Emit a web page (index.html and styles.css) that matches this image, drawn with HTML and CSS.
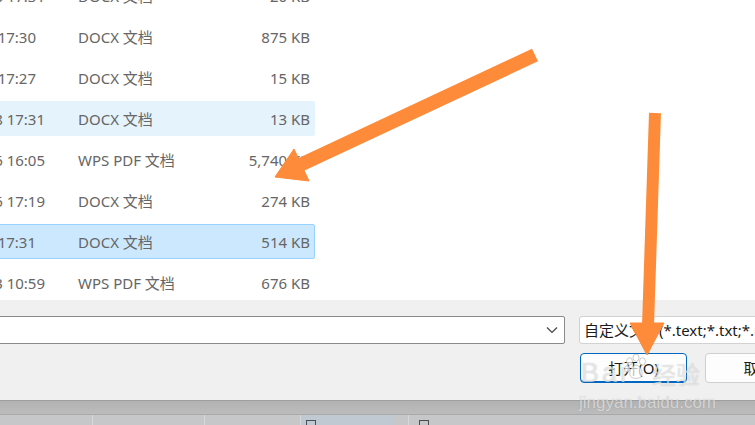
FILE: index.html
```html
<!DOCTYPE html>
<html lang="zh-CN">
<head>
<meta charset="utf-8">
<title>打开文件</title>
<link rel="stylesheet" href="styles.css">
</head>
<body>
<div class="screen">
  <div class="list">
    <div class="rows">
      <div class="row"><div class="item"><span class="date">2023/3/8 17:31</span><span class="type">DOCX 文档</span><span class="size">20 KB</span></div></div>
      <div class="row"><div class="item"><span class="date tight">2023/3/8 17:30</span><span class="type">DOCX 文档</span><span class="size">875 KB</span></div></div>
      <div class="row"><div class="item"><span class="date tight">2023/3/8 17:27</span><span class="type">DOCX 文档</span><span class="size">15 KB</span></div></div>
      <div class="row"><div class="item hover"><span class="date">2023/3/8 17:31</span><span class="type">DOCX 文档</span><span class="size">13 KB</span></div></div>
      <div class="row"><div class="item"><span class="date">2023/3/6 16:05</span><span class="type">WPS PDF 文档</span><span class="size">5,740 KB</span></div></div>
      <div class="row"><div class="item"><span class="date">2023/3/6 17:19</span><span class="type">DOCX 文档</span><span class="size">274 KB</span></div></div>
      <div class="row"><div class="item selected"><span class="date tight">2023/3/8 17:31</span><span class="type">DOCX 文档</span><span class="size">514 KB</span></div></div>
      <div class="row"><div class="item"><span class="date">2023/3/3 10:59</span><span class="type">WPS PDF 文档</span><span class="size">676 KB</span></div></div>
    </div>
  </div>
  <div class="panel">
    <div class="panel-row">
      <div class="filename">
        <svg class="chev" width="12" height="8" viewBox="0 0 12 8"><path d="M1 1.5 L6 6.5 L11 1.5" fill="none" stroke="#444" stroke-width="1.2"/></svg>
      </div>
      <div class="filter">自定义文件(*.text;*.txt;*.rtf)</div>
    </div>
    <div class="panel-row buttons">
      <div class="btn primary">打开(O)</div>
      <div class="btn">取消</div>
    </div>
  </div>
  <div class="taskbar">
    <div class="tb-top"></div>
    <div class="tb-bottom">
      <div class="tb-cell w92"></div>
      <div class="tb-cell w112"></div>
      <div class="tb-cell w96"></div>
      <div class="tb-cell w92 active"><span class="tb-icon"></span></div>
      <div class="tb-cell w15"></div>
      <div class="tb-cell last"><span class="tb-icon"></span></div>
    </div>
  </div>

  <div class="watermark">
    <div class="wm-top"><span class="wm-bai">Bai</span><svg class="paw" width="24" height="30" viewBox="0 0 26 30"><g fill="rgba(255,255,255,0.7)" stroke="rgba(120,120,120,0.4)" stroke-width="1"><ellipse cx="6" cy="9" rx="3.2" ry="4"/><ellipse cx="13" cy="5" rx="3.2" ry="4"/><ellipse cx="20" cy="9" rx="3.2" ry="4"/><ellipse cx="3.5" cy="17" rx="2.8" ry="3.4"/><path d="M13 13 C8 13 5 21 7 25 C9 28 17 28 19 25 C21 21 18 13 13 13 Z"/></g></svg><span class="wm-jy">经验</span></div>
    <div class="wm-url">jingyan.baidu.com</div>
  </div>

  <svg class="arrows" width="755" height="425" viewBox="0 0 755 425">
    <g fill="#fd8b3a" stroke="#fd8b3a">
      <line x1="535" y1="55" x2="300" y2="165" stroke-width="14"/>
      <polygon points="275,177 309,181 294,149" stroke-width="1"/>
      <line x1="655" y1="113" x2="648" y2="326" stroke-width="12"/>
      <polygon points="630,323 664,323 647,355" stroke-width="1"/>
    </g>
  </svg>
</div>
</body>
</html>
```
FILE: styles.css
```css
html, body {
  margin: 0;
  padding: 0;
  background: #ffffff;
}
body {
  width: 755px;
  height: 425px;
  overflow: hidden;
  font-family: "Noto Sans", "Noto Sans CJK SC", sans-serif;
}
.screen {
  position: relative;
  width: 755px;
  height: 425px;
  overflow: hidden;
}
.list {
  height: 300px;
  overflow: hidden;
  background: #ffffff;
}
.rows {
  margin-top: -25px;
  margin-left: -80px;
  width: 395px;
}
.row {
  height: 41px;
  padding: 3px 0;
  box-sizing: border-box;
}
.item {
  height: 35px;
  box-sizing: border-box;
  border: 1px solid transparent;
  border-radius: 2px;
  display: grid;
  grid-template-columns: 124px 1fr auto;
  align-items: center;
  padding-right: 4px;
  font-size: 15px;
  color: #666666;
  white-space: nowrap;
}
.item.hover {
  background: #e5f3fd;
  border-color: #e5f3fd;
}
.item.selected {
  background: #cce8ff;
  border-color: #99d1ff;
}
.date {
  text-align: right;
  overflow: hidden;
}
.date.tight {
  padding-right: 9px;
}
.type {
  padding-left: 33px;
}
.size {
  text-align: right;
}
.panel {
  height: 100px;
  background: #f0f0f0;
  padding-top: 16px;
  box-sizing: border-box;
}
.panel-row {
  display: flex;
  gap: 14px;
  height: 28px;
}
.filename {
  flex: none;
  margin-left: -2px;
  width: 567px;
  height: 28px;
  box-sizing: border-box;
  background: #ffffff;
  border: 1px solid #8a8a8a;
  border-radius: 2px;
  display: flex;
  align-items: center;
  justify-content: flex-end;
  padding-right: 6px;
}
.filter {
  width: 220px;
  flex: none;
  height: 28px;
  box-sizing: border-box;
  background: #ffffff;
  border: 1px solid #d2d2d2;
  border-radius: 3px;
  padding-left: 4px;
  font-size: 15px;
  line-height: 26px;
  color: #1a1a1a;
  white-space: nowrap;
  overflow: hidden;
}
.buttons {
  margin-top: 9px;
  height: 30px;
  gap: 18px;
  padding-left: 580px;
}
.btn {
  flex: none;
  width: 107px;
  height: 30px;
  box-sizing: border-box;
  border: 1px solid #d0d0d0;
  border-radius: 4px;
  background: #fdfdfd;
  font-size: 15px;
  line-height: 28px;
  text-align: center;
  color: #1a1a1a;
}
.btn.primary {
  border-color: #0067c0;
  box-shadow: inset 0 -1px 0 #0067c0;
}
.taskbar {
  height: 25px;
  border-top: 1px solid #9e9e9e;
  box-sizing: border-box;
}
.tb-top {
  height: 13px;
  background: linear-gradient(#b2b2b2, #bcbcbc);
  border-bottom: 1px solid #a9a9a9;
}
.tb-bottom {
  height: 10px;
  background: #c5c7c9;
  display: flex;
}
.tb-cell {
  height: 10px;
  border-right: 1px solid #d6d8da;
  position: relative;
}
.w92 { width: 92px; }
.w112 { width: 111px; }
.w96 { width: 95px; }
.w15 { width: 14px; }
.tb-cell.active {
  background: #c0c8d1;
  border-right-color: #c5c7c9;
}
.tb-cell.last {
  flex: 1;
  border-right: none;
}
.tb-icon {
  position: absolute;
  left: 5px;
  top: 5px;
  width: 10px;
  height: 5px;
  border: 1.5px solid #4a4f57;
  border-bottom: none;
  box-sizing: border-box;
}
.tb-cell.last .tb-icon {
  left: 10px;
}
.watermark {
  position: absolute;
  left: 579px;
  top: 342px;
  width: 150px;
  font-family: "Liberation Sans", "Noto Sans CJK SC", sans-serif;
  color: rgba(255, 255, 255, 0.6);
  text-shadow: 0 0 1px rgba(90, 90, 90, 0.4);
}
.wm-top {
  display: flex;
  align-items: flex-end;
  height: 48px;
}
.wm-bai {
  font-size: 27px;
  line-height: 30px;
  letter-spacing: 3px;
  margin-left: 2px;
  margin-bottom: 2px;
}
.paw {
  margin-bottom: 8px;
  margin-left: -5px;
}
.wm-jy {
  font-family: "Noto Sans CJK SC", sans-serif;
  font-size: 24px;
  line-height: 30px;
  margin-left: 4px;
  margin-bottom: 1px;
}
.wm-url {
  font-size: 17px;
  line-height: 20px;
  margin-top: 3px;
}
.arrows {
  position: absolute;
  left: 0;
  top: 0;
  pointer-events: none;
}
```
